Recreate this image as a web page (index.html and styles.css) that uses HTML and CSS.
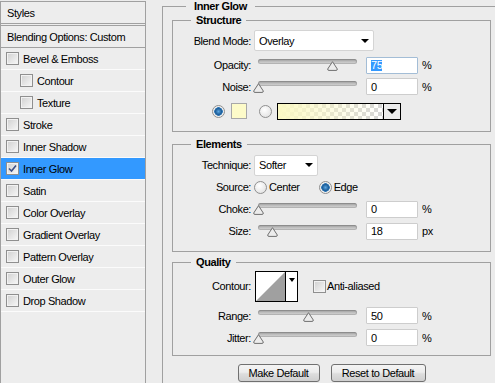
FILE: index.html
```html
<!DOCTYPE html>
<html>
<head>
<meta charset="utf-8">
<link rel="stylesheet" href="styles.css">
</head>
<body>
<div class="dialog">
  <aside class="styles-panel">
    <div class="sp-head">Styles</div>
    <div class="sp-blend">Blending Options: Custom</div>
    <ul class="sp-list">
      <li class="sp-item"><span class="cb"></span>Bevel &amp; Emboss</li>
      <li class="sp-item sub"><span class="cb"></span>Contour</li>
      <li class="sp-item sub"><span class="cb"></span>Texture</li>
      <li class="sp-item"><span class="cb"></span>Stroke</li>
      <li class="sp-item"><span class="cb"></span>Inner Shadow</li>
      <li class="sp-item selected"><span class="cb"><svg class="check" viewBox="0 0 9 9" width="9" height="9"><path d="M1 4.5 L3.5 7 L8 1.5" fill="none" stroke="#3c4f86" stroke-width="1.6"/></svg></span>Inner Glow</li>
      <li class="sp-item"><span class="cb"></span>Satin</li>
      <li class="sp-item"><span class="cb"></span>Color Overlay</li>
      <li class="sp-item"><span class="cb"></span>Gradient Overlay</li>
      <li class="sp-item"><span class="cb"></span>Pattern Overlay</li>
      <li class="sp-item"><span class="cb"></span>Outer Glow</li>
      <li class="sp-item"><span class="cb"></span>Drop Shadow</li>
    </ul>
  </aside>

  <main class="settings">
    <fieldset class="group outer">
      <legend>Inner Glow</legend>

      <fieldset class="group sub structure">
        <legend>Structure</legend>
        <div class="rows">
          <div class="row">
            <label class="lbl">Blend Mode:</label>
            <div class="select blend"><span>Overlay</span><i class="arrow"></i></div>
          </div>
          <div class="row">
            <label class="lbl">Opacity:</label>
            <div class="slider"><div class="track"></div><svg class="thumb" style="left:75%" width="11" height="10" viewBox="0 0 11 10"><path d="M5.5 0.7 L10.3 8 Q10.5 9.4 9 9.4 L2 9.4 Q0.5 9.4 0.7 8 Z" fill="#ececec" stroke="#6f6f6f"/></svg></div>
            <div class="num focus"><span class="sel">75</span></div><span class="unit">%</span>
          </div>
          <div class="row">
            <label class="lbl">Noise:</label>
            <div class="slider"><div class="track"></div><svg class="thumb" style="left:0%" width="11" height="10" viewBox="0 0 11 10"><path d="M5.5 0.7 L10.3 8 Q10.5 9.4 9 9.4 L2 9.4 Q0.5 9.4 0.7 8 Z" fill="#ececec" stroke="#6f6f6f"/></svg></div>
            <div class="num">0</div><span class="unit">%</span>
          </div>
          <div class="row color-row">
            <span class="radio checked"></span>
            <span class="swatch"></span>
            <span class="radio second"></span>
            <div class="gradient"><div class="grad-fill"></div><div class="grad-btn"><i class="arrow"></i></div></div>
          </div>
        </div>
      </fieldset>

      <fieldset class="group sub elements">
        <legend>Elements</legend>
        <div class="rows">
          <div class="row">
            <label class="lbl">Technique:</label>
            <div class="select technique"><span>Softer</span><i class="arrow"></i></div>
          </div>
          <div class="row">
            <label class="lbl">Source:</label>
            <span class="opt"><span class="radio"></span>Center</span>
            <span class="opt edge"><span class="radio checked"></span>Edge</span>
          </div>
          <div class="row">
            <label class="lbl">Choke:</label>
            <div class="slider"><div class="track"></div><svg class="thumb" style="left:0%" width="11" height="10" viewBox="0 0 11 10"><path d="M5.5 0.7 L10.3 8 Q10.5 9.4 9 9.4 L2 9.4 Q0.5 9.4 0.7 8 Z" fill="#ececec" stroke="#6f6f6f"/></svg></div>
            <div class="num">0</div><span class="unit">%</span>
          </div>
          <div class="row">
            <label class="lbl">Size:</label>
            <div class="slider"><div class="track"></div><svg class="thumb" style="left:14%" width="11" height="10" viewBox="0 0 11 10"><path d="M5.5 0.7 L10.3 8 Q10.5 9.4 9 9.4 L2 9.4 Q0.5 9.4 0.7 8 Z" fill="#ececec" stroke="#6f6f6f"/></svg></div>
            <div class="num">18</div><span class="unit">px</span>
          </div>
        </div>
      </fieldset>

      <fieldset class="group sub quality">
        <legend>Quality</legend>
        <div class="rows">
          <div class="row">
            <label class="lbl">Contour:</label>
            <div class="contour">
              <div class="contour-curve"><svg width="29" height="29" viewBox="0 0 29 29"><polygon points="0,29 29,0 29,29" fill="#a0a0a0"/></svg></div>
              <div class="contour-btn"><i class="arrow small"></i></div>
            </div>
            <span class="cb aa"></span><span class="aa-text">Anti-aliased</span>
          </div>
          <div class="row">
            <label class="lbl">Range:</label>
            <div class="slider"><div class="track"></div><svg class="thumb" style="left:50%" width="11" height="10" viewBox="0 0 11 10"><path d="M5.5 0.7 L10.3 8 Q10.5 9.4 9 9.4 L2 9.4 Q0.5 9.4 0.7 8 Z" fill="#ececec" stroke="#6f6f6f"/></svg></div>
            <div class="num">50</div><span class="unit">%</span>
          </div>
          <div class="row">
            <label class="lbl">Jitter:</label>
            <div class="slider"><div class="track"></div><svg class="thumb" style="left:0%" width="11" height="10" viewBox="0 0 11 10"><path d="M5.5 0.7 L10.3 8 Q10.5 9.4 9 9.4 L2 9.4 Q0.5 9.4 0.7 8 Z" fill="#ececec" stroke="#6f6f6f"/></svg></div>
            <div class="num">0</div><span class="unit">%</span>
          </div>
        </div>
      </fieldset>

      <div class="buttons">
        <button class="btn make">Make Default</button>
        <button class="btn reset">Reset to Default</button>
      </div>
    </fieldset>
  </main>
</div>
</body>
</html>
```

FILE: styles.css
```css
* { box-sizing: border-box; }
html, body { margin: 0; padding: 0; }
body {
  width: 495px;
  height: 383px;
  overflow: hidden;
  background: #ececec;
  font-family: "Liberation Sans", Arial, sans-serif;
  font-size: 11px;
  letter-spacing: -0.4px;
  color: #000;
}
.dialog { display: flex; align-items: flex-start; height: 383px; overflow: hidden; }

/* ---------- left styles list ---------- */
.styles-panel {
  flex: none;
  width: 146px;
  height: 420px;
  margin-top: 1px;
  border: 1px solid #a0a0a0;
  background: #ededed;
  overflow: hidden;
}
.sp-head {
  height: 24px;
  border-bottom: 3px double #a0a0a0;
  padding-left: 6px;
  display: flex;
  align-items: center;
}
.sp-blend {
  height: 22px;
  border-bottom: 1px solid #a0a0a0;
  padding-left: 6px;
  display: flex;
  align-items: center;
}
.sp-list { list-style: none; margin: 0; padding: 0; }
.sp-item {
  height: 22px;
  border-bottom: 1px solid #fbfbfb;
  padding-left: 5px;
  display: flex;
  align-items: center;
}
.sp-item.sub { padding-left: 19px; }
.sp-item.selected { background: #3399ff; }
.cb {
  flex: none;
  width: 13px;
  height: 13px;
  margin-right: 4px;
  border: 1px solid #8f8f8f;
  background: linear-gradient(135deg, #d0d0d0, #f8f8f8);
  box-shadow: inset 0 0 0 1px #f2f2f2;
  display: flex;
  align-items: center;
  justify-content: center;
}
.check { display: block; }

/* ---------- right settings ---------- */
.settings { flex: 1; min-width: 0; }
fieldset {
  margin: 0;
  padding: 0;
  border: 1px solid #a0a0a0;
  min-width: 0;
}
legend {
  font-weight: bold;
  line-height: 12px;
  padding: 0 5px;
}
.outer {
  margin-left: 16px;
  width: 380px;
  height: 430px;
  padding: 0 0 0 9px;
}
.outer > legend { margin-left: 14px; padding: 0 8px; }
.sub { width: 319px; }
.sub > legend { margin-left: 18px; }
.structure { margin-top: 2px; }
.elements { margin-top: 6px; }
.quality { margin-top: 4px; }

.rows { display: grid; }
.structure .rows { grid-template-rows: 29px 20px 23px 26px; padding-bottom: 7px; }
.elements .rows { grid-template-rows: 22px 22px 22px 22px; padding-top: 4px; padding-bottom: 9px; }
.quality .rows { grid-template-rows: 36px 23px 21px; padding-bottom: 7px; }

.row { display: flex; align-items: center; }
.lbl { flex: none; width: 78px; text-align: right; }

.select {
  flex: none;
  margin-left: 3px;
  height: 21px;
  background: #fff;
  border: 1px solid #d4d4d4;
  border-radius: 2px;
  display: flex;
  align-items: center;
  padding-left: 4px;
}
.select.blend { width: 120px; }
.select.technique { width: 64px; }
.arrow {
  display: block;
  width: 0;
  height: 0;
  border-left: 4px solid transparent;
  border-right: 4px solid transparent;
  border-top: 4px solid #000;
}
.select .arrow { margin-left: auto; margin-right: 4px; }

.slider {
  flex: none;
  position: relative;
  width: 99px;
  height: 12px;
  margin-left: 7px;
}
.track {
  height: 5px;
  border-radius: 3px;
  background: linear-gradient(#8d8d8d, #b9b9b9 40%, #d8d8d8);
  box-shadow: inset 0 0 0 1px rgba(120,120,120,0.35);
}
.thumb {
  position: absolute;
  top: 2px;
  margin-left: -5px;
  display: block;
}

.num {
  flex: none;
  margin-left: 9px;
  width: 52px;
  height: 17px;
  background: #fff;
  border: 1px solid #cdcdcd;
  border-radius: 1px;
  padding-left: 4px;
  display: flex;
  align-items: center;
}
.num.focus { border-color: #a3bdd6; }
.sel { background: #3399ff; color: #fff; line-height: 11px; }
.unit { margin-left: 4px; }

.radio {
  flex: none;
  width: 13px;
  height: 13px;
  border-radius: 50%;
  border: 1px solid #8f8f8f;
  background: radial-gradient(circle at 40% 35%, #ffffff, #dcdcdc);
  display: inline-block;
}
.radio.checked {
  background: radial-gradient(circle at 50% 50%, #5aa7e3 0, #1f5f9a 3px, #2e78b8 4px, #e8e8e8 4.5px, #f8f8f8 6px);
}
.color-row .radio.checked { margin-left: 39px; }
.swatch {
  flex: none;
  width: 16px;
  height: 16px;
  margin-left: 6px;
  background: #fdfbc9;
  border: 1px solid #a8a8a8;
}
.radio.second { margin-left: 12px; }
.gradient {
  flex: none;
  display: flex;
  width: 124px;
  height: 17px;
  margin-left: 5px;
  border: 1px solid #000;
  background: #fff;
}
.grad-fill {
  flex: 1;
  background:
    linear-gradient(to right, #fbf9c4, rgba(251, 249, 196, 0)),
    conic-gradient(#d6d6d6 25%, #ffffff 0 50%, #d6d6d6 0 75%, #ffffff 0) 0 0 / 8px 8px;
}
.grad-btn {
  flex: none;
  width: 17px;
  border-left: 1px solid #000;
  background: #ececec;
  display: flex;
  align-items: center;
  justify-content: center;
}
.grad-btn .arrow { border-left-width: 5px; border-right-width: 5px; border-top-width: 5px; }

.opt { display: flex; align-items: center; gap: 2px; }
.lbl + .opt { margin-left: 3px; }
.opt.edge { margin-left: 19px; }

.contour {
  flex: none;
  display: flex;
  margin-left: 4px;
  height: 31px;
  border: 1px solid #000;
  background: #fff;
}
.contour-curve { width: 30px; border-right: 1px solid #000; }
.contour-curve svg { display: block; }
.contour-btn {
  width: 11px;
  display: flex;
  justify-content: center;
  padding-top: 6px;
}
.arrow.small { border-left-width: 3px; border-right-width: 3px; border-top-width: 4px; }
.cb.aa { margin-left: 15px; margin-right: 1px; }

.buttons {
  display: flex;
  justify-content: center;
  gap: 11px;
  width: 319px;
  margin-top: 8px;
}
.btn {
  font: inherit;
  letter-spacing: inherit;
  color: #000;
  height: 18px;
  padding: 0;
  border: 1px solid #707070;
  border-radius: 3px;
  background: linear-gradient(#f4f4f4, #ececec 45%, #dddddd 55%, #cfcfcf);
}
.btn.make { width: 82px; }
.btn.reset { width: 95px; }
```
